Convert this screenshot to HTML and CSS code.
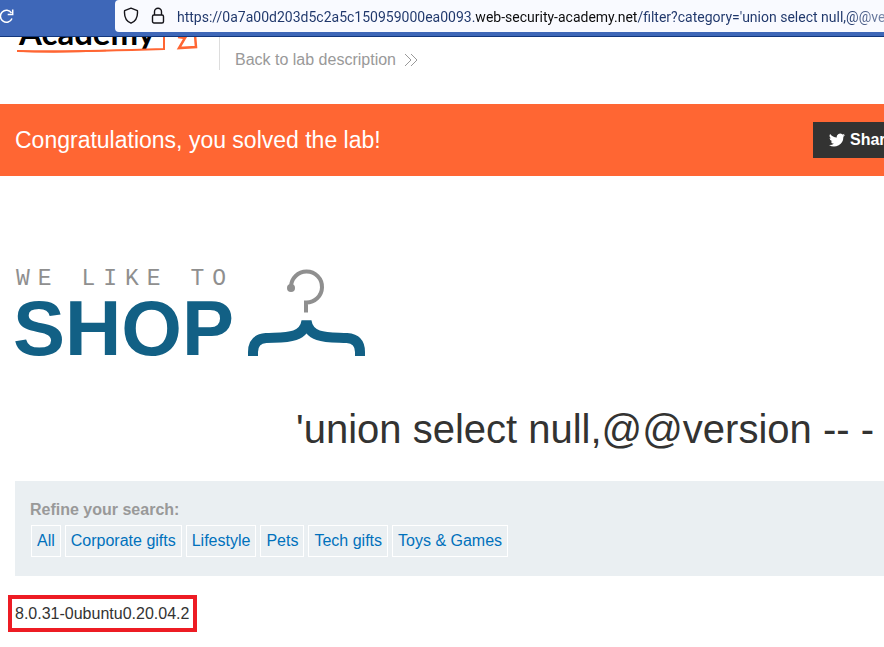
FILE: index.html
```
<!DOCTYPE html>
<html lang="en">
  <head>
    <meta charset="utf-8">
    <title>Web Security Academy</title>
    <link rel="stylesheet" href="styles.css">
  </head>
  <body>
    <div class="browser-bar">
      <button class="reload" aria-label="Reload">
        <svg width="16" height="16" viewBox="0 0 16 16" fill="none" stroke="currentColor" stroke-width="1.5">
          <path d="M11.5 5A6 6 0 1 0 12 10.5"/>
          <path d="M12.7 1.5v5H7.7" />
        </svg>
      </button>
      <div class="url-box">
        <svg width="16" height="18" viewBox="0 0 16 18" fill="none" stroke="#15141a" stroke-width="1.4" stroke-linejoin="round">
          <path d="M8 1.2 14.4 3.6C15 9.5 13 14 8 16.2 3 14 1 9.5 1.6 3.6Z"/>
        </svg>
        <svg width="14" height="18" viewBox="0 0 14 18" fill="none" stroke="#15141a" stroke-width="1.4">
          <rect x="1.5" y="8" width="11" height="8" rx="1.5"/>
          <path d="M3.5 8V4.7a3.5 3.5 0 0 1 7 0V8"/>
        </svg>
        <input class="url" type="text" aria-label="Address" value="https://0a7a00d203d5c2a5c150959000ea0093.web-security-academy.net/filter?category='union select null,@@ver">
      </div>
    </div>

    <div class="viewport">
      <div class="page">
        <header class="academy-header">
          <div class="academy-logo">
            <span class="academy-name">Academy</span>
            <svg class="academy-lines" width="182" height="26" viewBox="0 0 182 26" fill="none" stroke="#ff6633">
              <path d="M1 24Q60 25 148 22V8" stroke-width="2"/>
              <path d="M1 24Q40 26 90 23.5" stroke-width="1.5"/>
              <path d="M162 10l7 1-6 10 17-1-1-12" stroke-width="2.5"/>
            </svg>
          </div>
          <a class="back-link" href="#">Back to lab description
            <svg width="14" height="14" viewBox="0 0 14 14" fill="none" stroke="#999" stroke-width="1">
              <path d="M1 1l6 6-6 6M7 1l6 6-6 6"/>
            </svg>
          </a>
        </header>

        <section class="banner">
          <p class="banner-text">Congratulations, you solved the lab!</p>
          <div class="banner-actions">
            <button class="share">
              <svg width="16" height="16" viewBox="0 0 24 24" fill="#fff">
                <path d="M24 4.6a10 10 0 0 1-2.8.8 5 5 0 0 0 2.1-2.7 10 10 0 0 1-3.1 1.2 4.9 4.9 0 0 0-8.4 4.5A14 14 0 0 1 1.7 3.1a4.9 4.9 0 0 0 1.5 6.6 5 5 0 0 1-2.2-.6 4.9 4.9 0 0 0 3.9 4.9 5 5 0 0 1-2.2.1 4.9 4.9 0 0 0 4.6 3.4A10 10 0 0 1 0 19.5 14 14 0 0 0 21.5 7.1 10 10 0 0 0 24 4.6z"/>
              </svg>
              Share your skills!
            </button>
          </div>
        </section>

        <main class="container">
          <div class="shop-logo">
            <div class="shop-words">
              <span class="shop-small">WE LIKE TO</span>
              <span class="shop-big">SHOP</span>
            </div>
            <svg class="hanger" width="118" height="92" viewBox="0 0 118 92" fill="none">
              <path d="M43 22a15.500 15.500 0 1 1 15 15.500v10" stroke="#8f8f8f" stroke-width="4"/>
              <circle cx="43" cy="23" r="4" fill="#8f8f8f"/>
              <path d="M5 91V87Q5 74 18 73C34 72 56 75 58.500 56C61 75 83 72 99 73Q112 74 112 87V91" stroke="#126085" stroke-width="10"/>
            </svg>
          </div>
          <h1 class="title">'union select null,@@version -- -</h1>
          <nav class="filters">
            <div class="filters-label">Refine your search:</div>
            <div class="filter-links">
              <a class="filter" href="#">All</a>
              <a class="filter" href="#">Corporate gifts</a>
              <a class="filter" href="#">Lifestyle</a>
              <a class="filter" href="#">Pets</a>
              <a class="filter" href="#">Tech gifts</a>
              <a class="filter" href="#">Toys &amp; Games</a>
            </div>
          </nav>
          <table class="results">
            <tr><th>8.0.31-0ubuntu0.20.04.2</th></tr>
          </table>
        </main>
      </div>
    </div>
  </body>
</html>
```
FILE: styles.css
```
* { box-sizing: border-box; }
body {
  margin: 0;
  background: #fff;
  color: #333332;
  font-family: "Liberation Sans", Arial, sans-serif;
  font-size: 16px;
  overflow-x: hidden;
}
.browser-bar {
  display: flex;
  height: 37px;
  padding-bottom: 4px;
  background: #3e67b8;
  border-bottom: 1px solid #12377d;
}
.reload {
  width: 115px;
  padding: 0;
  border: none;
  background: none;
  color: #fff;
  text-align: left;
}
.reload svg { display: block; }
.url-box {
  flex: 1;
  display: flex;
  align-items: center;
  gap: 12px;
  padding-left: 8px;
  background: #f9faff;
  border-radius: 4px 0 0 4px;
}
.url-box svg { flex: none; }
.url {
  flex: 1;
  min-width: 0;
  padding: 2px 0 0;
  border: none;
  outline: none;
  font-family: Roboto, "Noto Sans", sans-serif;
  font-size: 14px;
  /* the domain stands out and the end of the address fades */
  background: linear-gradient(90deg, #1f376b 298px, #0c0c0d 298px, #0c0c0d 460px, #1f376b 460px, #1f376b 670px, #9ba6c0 720px);
  -webkit-background-clip: text;
  background-clip: text;
  color: transparent;
}
.viewport { overflow: hidden; }
.page { min-width: 1170px; }
.academy-header {
  display: flex;
  align-items: flex-start;
  height: 67px;
  padding-left: 15px;
}
.academy-logo {
  position: relative;
  width: 205px;
  height: 33px;
  border-right: 1px solid #ddd;
}
.academy-name {
  display: block;
  margin: -25px 0 0 4px;
  color: #000;
  font-family: Lato, sans-serif;
  font-size: 33px;
  font-weight: bold;
  line-height: 40px;
}
.academy-lines {
  position: absolute;
  top: -10px;
  left: 1px;
}
.back-link {
  display: flex;
  align-items: center;
  gap: 8px;
  padding: 13px 0 0 15px;
  color: #999;
  line-height: 20px;
  text-decoration: none;
}
.banner {
  display: flex;
  align-items: center;
  height: 72px;
  padding: 0 15px;
  background: #ff6633;
}
.banner-text {
  flex: 1;
  margin: 0;
  color: #fff;
  font-size: 23px;
}
.banner-actions { width: 342px; }
.share {
  display: flex;
  align-items: center;
  gap: 5px;
  height: 36px;
  padding: 0 16px;
  border: none;
  background: #333332;
  color: #fff;
  font: bold 16px "Liberation Sans", Arial, sans-serif;
}
.container { padding: 89px 15px 0; }
.shop-logo {
  display: flex;
  align-items: flex-start;
  gap: 12px;
}
.shop-words { width: 221px; }
.shop-small {
  display: block;
  padding-left: 1px;
  color: #8f8f8f;
  font-family: "Liberation Mono", "Courier New", monospace;
  font-size: 23px;
  line-height: 28px;
  letter-spacing: 8px;
  white-space: nowrap;
}
.shop-big {
  display: block;
  margin-left: -2px;
  color: #126085;
  font-size: 78px;
  font-weight: bold;
  line-height: 71px;
}
.title {
  margin: 40px 0 27px;
  font-size: 40px;
  font-weight: normal;
  line-height: 50px;
  text-align: center;
}
.filters {
  padding: 17px 15px 19px;
  background: #eaeff2;
}
.filters-label {
  color: #999;
  font-weight: bold;
  line-height: 23px;
}
.filter-links {
  display: flex;
  gap: 4px;
  padding: 4px 0 0 1px;
}
.filter {
  padding: 0 5px;
  border: 1px solid #fff;
  color: #0071bc;
  line-height: 30px;
  text-decoration: none;
}
.results {
  margin: 19px 0 0 -7px;
  border: 4px solid #ed1c24;
  border-spacing: 0;
}
.results th {
  padding: 0 4px 0 3px;
  font-weight: normal;
  line-height: 29px;
}
```
